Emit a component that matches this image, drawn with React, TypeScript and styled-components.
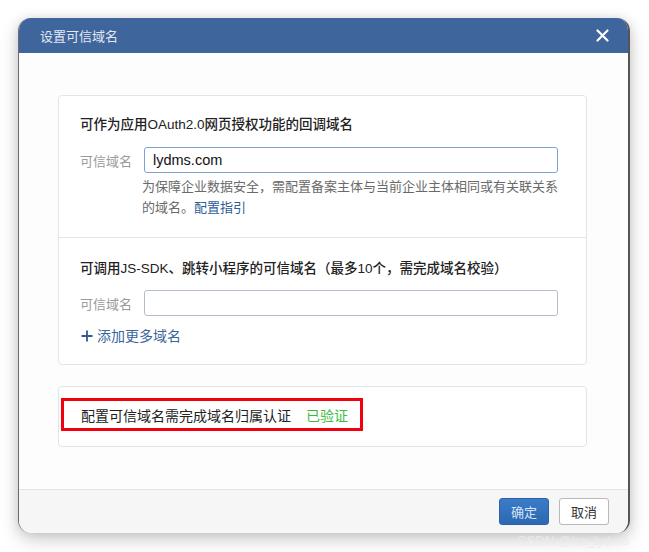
import React, { useState } from 'react';
import styled, { createGlobalStyle } from 'styled-components';

const GlobalStyle = createGlobalStyle`
  html, body {
    margin: 0;
    padding: 0;
    background: #ffffff;
  }

  body {
    font-family: "Liberation Sans", "Noto Sans CJK SC", sans-serif;
    color: #333;
  }

  * {
    box-sizing: border-box;
  }
`;

const Page = styled.div`
  position: relative;
  width: 649px;
  height: 552px;
  padding: 18px 0 0 18px;
`;

const Dialog = styled.div`
  display: flex;
  flex-direction: column;
  width: 612px;
  height: 515px;
  background: #fff;
  border-radius: 13px;
  overflow: hidden;
  border-left: 1px solid #6b6b6b;
  border-right: 2px solid #555;
  box-shadow: 0 6px 18px rgba(0, 0, 0, 0.22), 0 0 10px rgba(0, 0, 0, 0.08);
`;

const Header = styled.div`
  display: flex;
  align-items: center;
  justify-content: space-between;
  height: 35px;
  padding: 0 18px 0 21px;
  background: #3e659c;
`;

const Title = styled.span`
  font-size: 13px;
  color: #e3e9f2;
`;

const CloseButton = styled.button`
  display: flex;
  align-items: center;
  justify-content: center;
  width: 16px;
  height: 16px;
  padding: 0;
  background: transparent;
  border: none;
  cursor: pointer;
`;

const Body = styled.div`
  flex: 1;
  display: flex;
  flex-direction: column;
  gap: 21px;
  padding: 42px 41px 0 39px;
  background: #fdfdfd;
`;

const Card = styled.div`
  display: flex;
  flex-direction: column;
  border: 1px solid #e3e4e8;
  border-radius: 4px;
  background: #fff;
`;

const Section = styled.div<{ divided?: boolean; pad?: string }>`
  display: flex;
  flex-direction: column;
  padding: ${({ pad }) => pad || '0'};
  border-top: ${({ divided }) => (divided ? '1px solid #e3e4e8' : 'none')};
`;

const Heading = styled.div`
  font-size: 13.5px;
  line-height: 20px;
  color: #222;
  font-weight: 500;
`;

const FieldRow = styled.div<{ top: number }>`
  display: flex;
  align-items: center;
  gap: 10px;
  margin-top: ${({ top }) => top}px;
`;

const FieldLabel = styled.label`
  width: 54px;
  font-size: 13px;
  color: #9a9a9a;
  white-space: nowrap;
`;

const TextInput = styled.input<{ focused?: boolean }>`
  width: 414px;
  height: 26px;
  padding: 0 8px;
  font-family: inherit;
  font-size: 14.5px;
  color: #111;
  background: #fff;
  border: 1px solid ${({ focused }) => (focused ? '#7ea1d6' : '#b5bccb')};
  border-radius: 3px;
  outline: none;
`;

const Help = styled.p`
  width: 421px;
  margin: 3px 0 0 62px;
  font-size: 13px;
  line-height: 21px;
  color: #6a6a6a;
`;

const Link = styled.a`
  color: #2d5d97;
  text-decoration: none;
`;

const AddMore = styled.button`
  display: flex;
  align-items: center;
  gap: 3px;
  margin-top: 10px;
  padding: 0;
  width: fit-content;
  font-family: inherit;
  font-size: 14px;
  line-height: 20px;
  color: #3a659c;
  background: transparent;
  border: none;
  cursor: pointer;
`;

const VerifyBox = styled.div`
  display: flex;
  align-items: center;
  gap: 15px;
  width: 302px;
  height: 33px;
  margin: 11px 0 15px 2px;
  padding-left: 17px;
  border: 3px solid #f1000d;
  font-size: 14px;
  color: #222;
`;

const Verified = styled.span`
  color: #3dbb3f;
`;

const Footer = styled.div`
  display: flex;
  align-items: center;
  justify-content: flex-end;
  gap: 10px;
  height: 44px;
  padding: 0 19px 0 0;
  background: #f6f6f6;
  border-top: 1px solid #e2e3e8;
`;

const Button = styled.button<{ primary?: boolean }>`
  width: 50px;
  height: 27px;
  padding: 0;
  font-family: inherit;
  font-size: 13px;
  border-radius: 3px;
  cursor: pointer;
  color: ${({ primary }) => (primary ? '#d7e4f5' : '#333')};
  background: ${({ primary }) =>
    primary ? 'linear-gradient(#3b7cc8, #2c68b1)' : '#fff'};
  border: 1px solid ${({ primary }) => (primary ? '#2c63a8' : '#b9b9b9')};
`;

const Watermark = styled.span`
  position: absolute;
  right: 20px;
  bottom: 4px;
  font-size: 13px;
  color: rgba(235, 235, 235, 0.95);
  letter-spacing: 0.2px;
`;

const App = () => {
  const [domain, setDomain] = useState('lydms.com');
  const [jsDomain, setJsDomain] = useState('');

  return (
    <Page>
      <GlobalStyle />
      <Dialog>
        <Header>
          <Title>设置可信域名</Title>
          <CloseButton aria-label="关闭">
            <svg width="13" height="13" viewBox="0 0 13 13">
              <path d="M1.5 1.5 L11.5 11.5 M11.5 1.5 L1.5 11.5" stroke="#fff" strokeWidth="2.2" strokeLinecap="round" />
            </svg>
          </CloseButton>
        </Header>

        <Body>
          <Card>
            <Section pad="19px 0 19px 21px">
              <Heading>可作为应用OAuth2.0网页授权功能的回调域名</Heading>
              <FieldRow top={12}>
                <FieldLabel>可信域名</FieldLabel>
                <TextInput focused value={domain} onChange={(e) => setDomain(e.target.value)} />
              </FieldRow>
              <Help>
                为保障企业数据安全，需配置备案主体与当前企业主体相同或有关联关系的域名。<Link href="#">配置指引</Link>
              </Help>
            </Section>
            <Section divided pad="21px 0 18px 21px">
              <Heading>可调用JS-SDK、跳转小程序的可信域名（最多10个，需完成域名校验）</Heading>
              <FieldRow top={11}>
                <FieldLabel>可信域名</FieldLabel>
                <TextInput value={jsDomain} onChange={(e) => setJsDomain(e.target.value)} />
              </FieldRow>
              <AddMore>
                <svg width="14" height="14" viewBox="0 0 14 14">
                  <path d="M7 1.5 V12.5 M1.5 7 H12.5" stroke="#2f5a8f" strokeWidth="1.8" />
                </svg>
                添加更多域名
              </AddMore>
            </Section>
          </Card>

          <Card>
            <VerifyBox>
              <span>配置可信域名需完成域名归属认证</span>
              <Verified>已验证</Verified>
            </VerifyBox>
          </Card>
        </Body>

        <Footer>
          <Button primary>确定</Button>
          <Button>取消</Button>
        </Footer>
      </Dialog>
      <Watermark>CSDN @ha_lydms</Watermark>
    </Page>
  );
};

export default App;
